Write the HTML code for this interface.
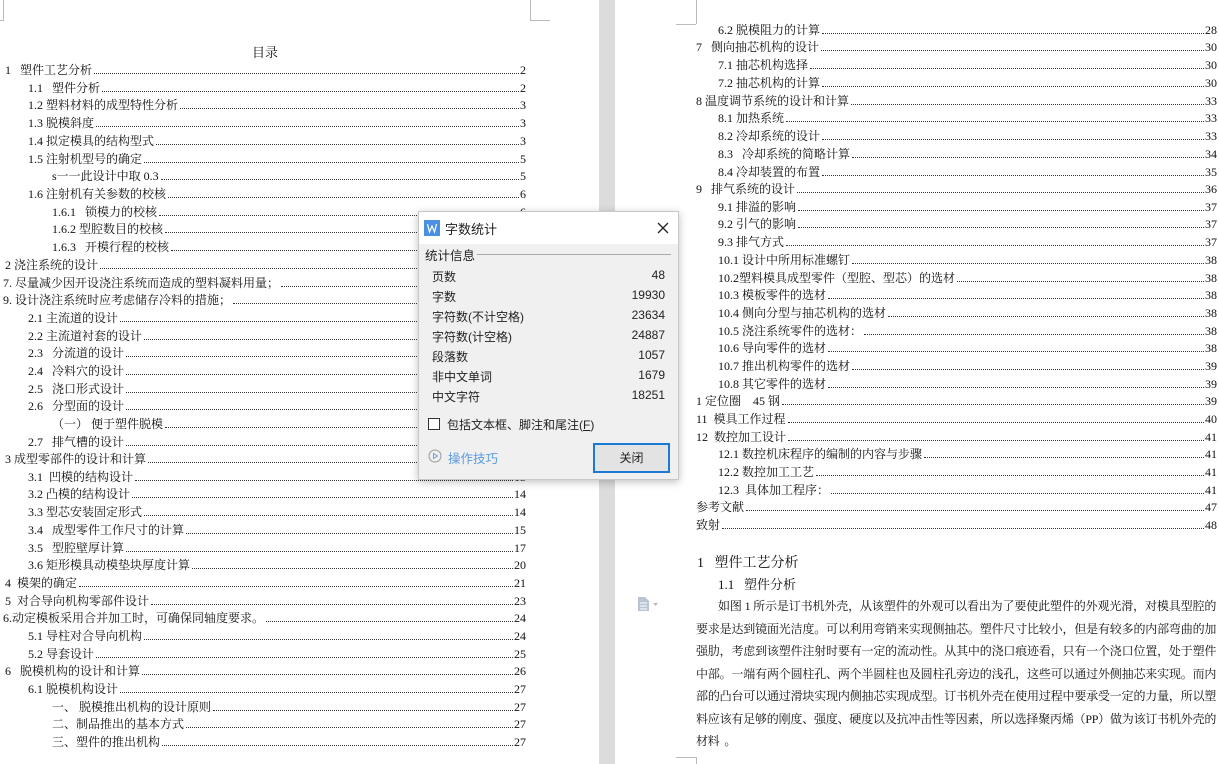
<!DOCTYPE html>
<html><head><meta charset="utf-8"><style>
*{margin:0;padding:0;box-sizing:border-box}
body{width:1219px;height:764px;overflow:hidden;background:#fff;position:relative;font-family:"Liberation Serif","Noto Serif CJK SC",serif;font-size:12px;color:#111}
.gap{position:absolute;left:599px;top:0;width:16px;height:764px;background:#dcdcdd}
.row{position:absolute;height:18px;display:flex;align-items:flex-end;white-space:nowrap;line-height:16px}
.row .f{flex:1;border-bottom:1px dotted #333;margin:0 1px 4px 2px}
.L{left:0;width:526px}
.R{left:690px;width:527px}
.mk{position:absolute;background:#bbb}
.dlg{position:absolute;left:418px;top:211px;width:261px;height:269px;background:#f0f0f0;border:1px solid #c8c8c8;box-shadow:0 2px 8px rgba(0,0,0,.25);font-family:"Liberation Sans","Noto Sans CJK SC",sans-serif;font-size:12px;color:#222}
.dlg .tb{height:32px;background:#fff;position:relative}
.dlg .st{position:absolute;left:13px;display:flex;justify-content:space-between;width:233px}
.bl{position:absolute;left:696px;width:520px;font-size:12px;letter-spacing:-0.4px;line-height:22px;height:22px;white-space:nowrap;text-align:justify;text-align-last:justify}
</style></head><body>
<div class="gap"></div>
<div class="mk" style="left:3px;top:0;width:1px;height:20px"></div><div class="mk" style="left:0;top:20px;width:4px;height:1px"></div>
<div class="mk" style="left:530px;top:0;width:1px;height:20px"></div><div class="mk" style="left:530px;top:20px;width:20px;height:1px"></div>
<div class="mk" style="left:696px;top:0;width:1px;height:24px"></div><div class="mk" style="left:676px;top:24px;width:20px;height:1px"></div>
<div class="mk" style="left:696px;top:757px;width:1px;height:7px"></div><div class="mk" style="left:676px;top:757px;width:20px;height:1px"></div>
<div style="position:absolute;left:252px;top:42px;font-size:13px">目录</div>

<div class="row L" style="top:60px"><span style="padding-left:5px">1&nbsp;&nbsp;&nbsp;塑件工艺分析</span><span class="f"></span>2</div>
<div class="row L" style="top:78px"><span style="padding-left:28px">1.1&nbsp;&nbsp;&nbsp;塑件分析</span><span class="f"></span>2</div>
<div class="row L" style="top:95px"><span style="padding-left:28px">1.2 塑料材料的成型特性分析</span><span class="f"></span>3</div>
<div class="row L" style="top:113px"><span style="padding-left:28px">1.3&nbsp;脱模斜度</span><span class="f"></span>3</div>
<div class="row L" style="top:131px"><span style="padding-left:28px">1.4&nbsp;拟定模具的结构型式</span><span class="f"></span>3</div>
<div class="row L" style="top:149px"><span style="padding-left:28px">1.5&nbsp;注射机型号的确定</span><span class="f"></span>5</div>
<div class="row L" style="top:166px"><span style="padding-left:52px">s一一此设计中取 0.3</span><span class="f"></span>5</div>
<div class="row L" style="top:184px"><span style="padding-left:28px">1.6&nbsp;注射机有关参数的校核</span><span class="f"></span>6</div>
<div class="row L" style="top:202px"><span style="padding-left:52px">1.6.1&nbsp;&nbsp;&nbsp;锁模力的校核</span><span class="f"></span>6</div>
<div class="row L" style="top:219px"><span style="padding-left:52px">1.6.2 型腔数目的校核</span><span class="f"></span>6</div>
<div class="row L" style="top:237px"><span style="padding-left:52px">1.6.3&nbsp;&nbsp;&nbsp;开模行程的校核</span><span class="f"></span>6</div>
<div class="row L" style="top:255px"><span style="padding-left:5px">2 浇注系统的设计</span><span class="f"></span>8</div>
<div class="row L" style="top:273px"><span style="padding-left:3px">7.&nbsp;尽量减少因开设浇注系统而造成的塑料凝料用量；</span><span class="f"></span>8</div>
<div class="row L" style="top:290px"><span style="padding-left:3px">9.&nbsp;设计浇注系统时应考虑储存冷料的措施；</span><span class="f"></span>8</div>
<div class="row L" style="top:308px"><span style="padding-left:28px">2.1&nbsp;主流道的设计</span><span class="f"></span>9</div>
<div class="row L" style="top:326px"><span style="padding-left:28px">2.2&nbsp;主流道衬套的设计</span><span class="f"></span>9</div>
<div class="row L" style="top:343px"><span style="padding-left:28px">2.3&nbsp;&nbsp;&nbsp;分流道的设计</span><span class="f"></span>10</div>
<div class="row L" style="top:361px"><span style="padding-left:28px">2.4&nbsp;&nbsp;&nbsp;冷料穴的设计</span><span class="f"></span>10</div>
<div class="row L" style="top:379px"><span style="padding-left:28px">2.5&nbsp;&nbsp;&nbsp;浇口形式设计</span><span class="f"></span>11</div>
<div class="row L" style="top:396px"><span style="padding-left:28px">2.6&nbsp;&nbsp;&nbsp;分型面的设计</span><span class="f"></span>12</div>
<div class="row L" style="top:414px"><span style="padding-left:52px">（一）&nbsp;便于塑件脱模</span><span class="f"></span>12</div>
<div class="row L" style="top:432px"><span style="padding-left:28px">2.7&nbsp;&nbsp;&nbsp;排气槽的设计</span><span class="f"></span>13</div>
<div class="row L" style="top:449px"><span style="padding-left:5px">3 成型零部件的设计和计算</span><span class="f"></span>13</div>
<div class="row L" style="top:467px"><span style="padding-left:28px">3.1&nbsp;&nbsp;凹模的结构设计</span><span class="f"></span>13</div>
<div class="row L" style="top:484px"><span style="padding-left:28px">3.2 凸模的结构设计</span><span class="f"></span>14</div>
<div class="row L" style="top:502px"><span style="padding-left:28px">3.3 型芯安装固定形式</span><span class="f"></span>14</div>
<div class="row L" style="top:520px"><span style="padding-left:28px">3.4&nbsp;&nbsp;&nbsp;成型零件工作尺寸的计算</span><span class="f"></span>15</div>
<div class="row L" style="top:538px"><span style="padding-left:28px">3.5&nbsp;&nbsp;&nbsp;型腔壁厚计算</span><span class="f"></span>17</div>
<div class="row L" style="top:555px"><span style="padding-left:28px">3.6 矩形模具动模垫块厚度计算</span><span class="f"></span>20</div>
<div class="row L" style="top:573px"><span style="padding-left:5px">4&nbsp;&nbsp;模架的确定</span><span class="f"></span>21</div>
<div class="row L" style="top:591px"><span style="padding-left:5px">5&nbsp;&nbsp;对合导向机构零部件设计</span><span class="f"></span>23</div>
<div class="row L" style="top:608px"><span style="padding-left:3px">6.动定模板采用合并加工时，可确保同轴度要求。</span><span class="f"></span>24</div>
<div class="row L" style="top:626px"><span style="padding-left:28px">5.1&nbsp;导柱对合导向机构</span><span class="f"></span>24</div>
<div class="row L" style="top:644px"><span style="padding-left:28px">5.2&nbsp;导套设计</span><span class="f"></span>25</div>
<div class="row L" style="top:661px"><span style="padding-left:5px">6&nbsp;&nbsp;&nbsp;脱模机构的设计和计算</span><span class="f"></span>26</div>
<div class="row L" style="top:679px"><span style="padding-left:28px">6.1&nbsp;脱模机构设计</span><span class="f"></span>27</div>
<div class="row L" style="top:697px"><span style="padding-left:52px">一、&nbsp;脱模推出机构的设计原则</span><span class="f"></span>27</div>
<div class="row L" style="top:714px"><span style="padding-left:52px">二、制品推出的基本方式</span><span class="f"></span>27</div>
<div class="row L" style="top:732px"><span style="padding-left:52px">三、塑件的推出机构</span><span class="f"></span>27</div>

<div class="row R" style="top:20px"><span style="padding-left:28px">6.2 脱模阻力的计算</span><span class="f"></span>28</div>
<div class="row R" style="top:37px"><span style="padding-left:6px">7&nbsp;&nbsp;&nbsp;侧向抽芯机构的设计</span><span class="f"></span>30</div>
<div class="row R" style="top:55px"><span style="padding-left:28px">7.1 抽芯机构选择</span><span class="f"></span>30</div>
<div class="row R" style="top:73px"><span style="padding-left:28px">7.2 抽芯机构的计算</span><span class="f"></span>30</div>
<div class="row R" style="top:91px"><span style="padding-left:6px">8&nbsp;温度调节系统的设计和计算</span><span class="f"></span>33</div>
<div class="row R" style="top:108px"><span style="padding-left:28px">8.1&nbsp;加热系统</span><span class="f"></span>33</div>
<div class="row R" style="top:126px"><span style="padding-left:28px">8.2&nbsp;冷却系统的设计</span><span class="f"></span>33</div>
<div class="row R" style="top:144px"><span style="padding-left:28px">8.3&nbsp;&nbsp;&nbsp;冷却系统的简略计算</span><span class="f"></span>34</div>
<div class="row R" style="top:162px"><span style="padding-left:28px">8.4 冷却装置的布置</span><span class="f"></span>35</div>
<div class="row R" style="top:179px"><span style="padding-left:6px">9&nbsp;&nbsp;&nbsp;排气系统的设计</span><span class="f"></span>36</div>
<div class="row R" style="top:197px"><span style="padding-left:28px">9.1&nbsp;排溢的影响</span><span class="f"></span>37</div>
<div class="row R" style="top:214px"><span style="padding-left:28px">9.2&nbsp;引气的影响</span><span class="f"></span>37</div>
<div class="row R" style="top:232px"><span style="padding-left:28px">9.3&nbsp;排气方式</span><span class="f"></span>37</div>
<div class="row R" style="top:250px"><span style="padding-left:28px">10.1 设计中所用标准螺钉</span><span class="f"></span>38</div>
<div class="row R" style="top:268px"><span style="padding-left:28px">10.2塑料模具成型零件（型腔、型芯）的选材</span><span class="f"></span>38</div>
<div class="row R" style="top:285px"><span style="padding-left:28px">10.3&nbsp;模板零件的选材</span><span class="f"></span>38</div>
<div class="row R" style="top:303px"><span style="padding-left:28px">10.4 侧向分型与抽芯机构的选材</span><span class="f"></span>38</div>
<div class="row R" style="top:321px"><span style="padding-left:28px">10.5&nbsp;浇注系统零件的选材：</span><span class="f"></span>38</div>
<div class="row R" style="top:338px"><span style="padding-left:28px">10.6&nbsp;导向零件的选材</span><span class="f"></span>38</div>
<div class="row R" style="top:356px"><span style="padding-left:28px">10.7&nbsp;推出机构零件的选材</span><span class="f"></span>39</div>
<div class="row R" style="top:374px"><span style="padding-left:28px">10.8&nbsp;其它零件的选材</span><span class="f"></span>39</div>
<div class="row R" style="top:391px"><span style="padding-left:6px">1&nbsp;定位圈&nbsp;&nbsp;&nbsp;&nbsp;45 钢</span><span class="f"></span>39</div>
<div class="row R" style="top:409px"><span style="padding-left:6px">11&nbsp;&nbsp;模具工作过程</span><span class="f"></span>40</div>
<div class="row R" style="top:427px"><span style="padding-left:6px">12&nbsp;&nbsp;数控加工设计</span><span class="f"></span>41</div>
<div class="row R" style="top:444px"><span style="padding-left:28px">12.1&nbsp;数控机床程序的编制的内容与步骤</span><span class="f"></span>41</div>
<div class="row R" style="top:462px"><span style="padding-left:28px">12.2 数控加工工艺</span><span class="f"></span>41</div>
<div class="row R" style="top:480px"><span style="padding-left:28px">12.3&nbsp;&nbsp;具体加工程序：</span><span class="f"></span>41</div>
<div class="row R" style="top:497px"><span style="padding-left:6px">参考文献</span><span class="f"></span>47</div>
<div class="row R" style="top:515px"><span style="padding-left:6px">致射</span><span class="f"></span>48</div>

<div style="position:absolute;left:697px;top:552px;font-size:14px">1&nbsp;&nbsp;&nbsp;塑件工艺分析</div>
<div style="position:absolute;left:718px;top:574px;font-size:13px">1.1&nbsp;&nbsp;&nbsp;塑件分析</div>
<div class="bl" style="top:595px;left:718px;width:498px">如图 1 所示是订书机外壳，从该塑件的外观可以看出为了要使此塑件的外观光滑，对模具型腔的</div>
<div class="bl" style="top:618px">要求是达到镜面光洁度。可以利用弯销来实现侧抽芯。塑件尺寸比较小，但是有较多的内部弯曲的加</div>
<div class="bl" style="top:640px">强肋，考虑到该塑件注射时要有一定的流动性。从其中的浇口痕迹看，只有一个浇口位置，处于塑件</div>
<div class="bl" style="top:663px">中部。一端有两个圆柱孔、两个半圆柱也及圆柱孔旁边的浅孔，这些可以通过外侧抽芯来实现。而内</div>
<div class="bl" style="top:685px">部的凸台可以通过滑块实现内侧抽芯实现成型。订书机外壳在使用过程中要承受一定的力量，所以塑</div>
<div class="bl" style="top:708px">料应该有足够的刚度、强度、硬度以及抗冲击性等因素，所以选择聚丙烯（PP）做为该订书机外壳的</div>
<div class="bl" style="top:730px;text-align-last:left">材料&nbsp;&nbsp;。</div>
<svg style="position:absolute;left:636px;top:596px" width="26" height="16"><path d="M2 1h7l4 4v10H2z" fill="#b8c4d4"/><path d="M4 7h7M4 10h7M4 13h7" stroke="#fff" stroke-width="1"/><path d="M17 7l2.5 3 2.5-3z" fill="#bbb"/></svg>

<div class="dlg">
 <div class="tb">
  <svg style="position:absolute;left:5px;top:8px" width="16" height="16"><rect width="16" height="16" fill="#4a90e2"/><path d="M3.5 4l2 8 2.5-6 2.5 6 2-8" fill="none" stroke="#fff" stroke-width="1.2"/></svg>
  <span style="position:absolute;left:26px;top:7px;font-size:13px">字数统计</span>
  <svg style="position:absolute;left:237px;top:9px" width="14" height="14"><path d="M2 2l10 10M12 2L2 12" stroke="#222" stroke-width="1.3"/></svg>
 </div>
 <div style="position:absolute;left:6px;top:33px;font-size:12.5px">统计信息</div>
 <div style="position:absolute;left:58px;top:42px;width:194px;height:1px;background:#aaa"></div>
 <div class="st" style="top:56px"><span>页数</span><span>48</span></div>
 <div class="st" style="top:76px"><span>字数</span><span>19930</span></div>
 <div class="st" style="top:96px"><span>字符数(不计空格)</span><span>23634</span></div>
 <div class="st" style="top:116px"><span>字符数(计空格)</span><span>24887</span></div>
 <div class="st" style="top:136px"><span>段落数</span><span>1057</span></div>
 <div class="st" style="top:156px"><span>非中文单词</span><span>1679</span></div>
 <div class="st" style="top:176px"><span>中文字符</span><span>18251</span></div>
 <div style="position:absolute;left:9px;top:206px;width:12px;height:12px;border:1px solid #333;background:#fff"></div>
 <div style="position:absolute;left:28px;top:204px">包括文本框、脚注和尾注(<u>F</u>)</div>
 <svg style="position:absolute;left:9px;top:237px" width="14" height="14"><circle cx="7" cy="7" r="6" fill="none" stroke="#999"/><path d="M5.5 4.5v5l4-2.5z" fill="none" stroke="#6aa0e0"/></svg>
 <div style="position:absolute;left:29px;top:236px;color:#5b9be0;font-size:12.5px">操作技巧</div>
 <div style="position:absolute;left:174px;top:231px;width:77px;height:30px;border:2px solid #1a7ad4;background:#e3e3e3;text-align:center;line-height:26px">关闭</div>
</div>
</body></html>
